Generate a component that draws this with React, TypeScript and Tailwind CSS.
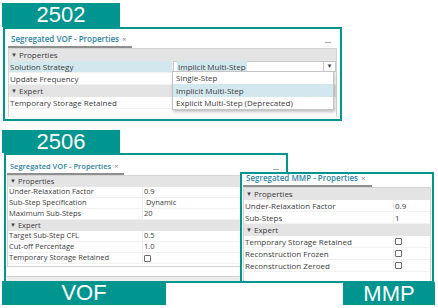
import React from 'react';

type Row =
  | { group: string }
  | { label: string; value?: string; check?: boolean; hl?: boolean; combo?: boolean };

const Banner: React.FC<{ text: string; className: string }> = ({ text, className }) => (
  <div
    className={`absolute bg-[#00968f] text-white flex items-center justify-center font-['Liberation_Sans',Arial,sans-serif] text-[22px] leading-none ${className}`}
  >
    {text}
  </div>
);

const Check = () => (
  <span className="inline-block w-[7px] h-[7px] border border-[#6a6a6a] rounded-[1px] bg-white" />
);

const PropTable: React.FC<{ rows: Row[]; nameW: number; rowH: string; text: string }> = ({
  rows,
  nameW,
  rowH,
  text,
}) => (
  <div className={`flex-1 flex flex-col border border-[#d4d4d4] border-b-0 ${text} text-[#3c3c3c]`}>
    {rows.map((r, i) =>
      'group' in r ? (
        <div key={i} className={`${rowH} bg-[#e4e4e4] flex items-center pl-[2px] gap-[2px]`}>
          <span className="text-[6px] text-[#444]">▼</span>
          <span>{r.group}</span>
        </div>
      ) : (
        <div key={i} className={`${rowH} flex border-b border-[#f1f1f1]`}>
          <div
            style={{ width: nameW }}
            className={`shrink-0 flex items-center pl-[1px] border-r border-[#ececec] ${r.hl ? 'bg-[#d3e8ee]' : ''}`}
          >
            {r.label}
          </div>
          {r.combo ? (
            <div className="flex-1 flex items-stretch border border-[#c9c9c9] bg-white">
              <div className="flex-1 flex items-center pl-[3px]">
                <span className="bg-[#d3e8ee] px-[1px]">{r.value}</span>
              </div>
              <div className="w-[12px] border-l border-[#c9c9c9] flex items-center justify-center text-[6px] text-[#444]">
                ▼
              </div>
            </div>
          ) : (
            <div className="flex-1 flex items-center pl-[1px]">
              {r.check ? <Check /> : r.value}
            </div>
          )}
        </div>
      )
    )}
  </div>
);

const TabBar: React.FC<{ title: string; h: string; text: string; minimize?: boolean }> = ({
  title,
  h,
  text,
  minimize,
}) => (
  <div className={`${h} flex items-end justify-between shrink-0`}>
    <div
      className={`border-b-2 border-[#8f8f8f] pl-[3px] pr-[6px] pb-[1px] font-semibold text-[#2f83a0] ${text} flex items-center gap-[3px]`}
    >
      <span>{title}</span>
      <span className="text-[#888] font-normal">×</span>
    </div>
    {minimize && <div className="w-[6px] h-[1px] bg-[#aaa] mr-[6px] mb-[5px]" />}
  </div>
);

export default function App() {
  const topRows: Row[] = [
    { group: 'Properties' },
    { label: 'Solution Strategy', value: 'Implicit Multi-Step', hl: true, combo: true },
    { label: 'Update Frequency' },
    { group: 'Expert' },
    { label: 'Temporary Storage Retained' },
  ];
  const vofRows: Row[] = [
    { group: 'Properties' },
    { label: 'Under-Relaxation Factor', value: '0.9' },
    { label: 'Sub-Step Specification', value: '\u00a0Dynamic' },
    { label: 'Maximum Sub-Steps', value: '20' },
    { group: 'Expert' },
    { label: 'Target Sub-Step CFL', value: '0.5' },
    { label: 'Cut-off Percentage', value: '1.0' },
    { label: 'Temporary Storage Retained', check: true },
  ];
  const mmpRows: Row[] = [
    { group: 'Properties' },
    { label: 'Under-Relaxation Factor', value: '0.9' },
    { label: 'Sub-Steps', value: '1' },
    { group: 'Expert' },
    { label: 'Temporary Storage Retained', check: true },
    { label: 'Reconstruction Frozen', check: true },
    { label: 'Reconstruction Zeroed', check: true },
  ];

  return (
    <div className="relative w-[438px] h-[308px] bg-white overflow-hidden font-['Open_Sans','Noto_Sans',sans-serif]">
      {/* 2502 */}
      <Banner text="2502" className="left-[2px] top-[3px] w-[118px] h-[24px]" />
      <div className="absolute left-[3px] top-[27px] w-[339px] h-[94px] border-2 border-[#00968f] bg-white flex flex-col px-[3px] pb-[2px]">
        <TabBar title="Segregated VOF - Properties" h="h-[19px]" text="text-[8px]" minimize />
        <PropTable rows={topRows} nameW={164} rowH="h-[12px]" text="text-[8px]" />
      </div>
      {/* dropdown list */}
      <div className="absolute left-[172px] top-[71px] w-[162px] bg-white border border-[#c4c4c4] shadow-[1px_2px_3px_rgba(0,0,0,0.25)] text-[8px] text-[#3c3c3c] flex flex-col">
        <div className="h-[12px] flex items-center pl-[3px]">Single-Step</div>
        <div className="h-[13px] flex items-center pl-[3px] bg-[#d3e8ee]">Implicit Multi-Step</div>
        <div className="h-[12px] flex items-center pl-[3px]">Explicit Multi-Step (Deprecated)</div>
      </div>

      {/* 2506 VOF */}
      <div className="absolute left-[4px] top-[153px] w-[284px] h-[130px] border-2 border-[#00968f] bg-white flex flex-col px-[1px]">
        <TabBar title="Segregated VOF - Properties" h="h-[20px]" text="text-[7.5px]" minimize />
        <PropTable rows={vofRows} nameW={135} rowH="h-[11px]" text="text-[7.5px]" />
        <div className="h-[10px] border-t border-[#d4d4d4]" />
        <div className="h-[5px] bg-[#ececec] border-t border-[#d0d0d0]" />
      </div>
      <Banner text="2506" className="left-[2px] top-[130px] w-[118px] h-[23px]" />

      {/* MMP */}
      <div className="absolute left-[240px] top-[172px] w-[194px] h-[111px] border-2 border-[#00968f] bg-white flex flex-col px-[1px]">
        <TabBar title="Segregated MMP - Properties" h="h-[13px]" text="text-[8px]" />
        <PropTable rows={mmpRows} nameW={150} rowH="h-[12px]" text="text-[8px]" />
      </div>

      <Banner text="VOF" className="left-[2px] top-[281px] w-[164px] h-[24px]" />
      <Banner text="MMP" className="left-[343px] top-[282px] w-[92px] h-[23px]" />
    </div>
  );
}
